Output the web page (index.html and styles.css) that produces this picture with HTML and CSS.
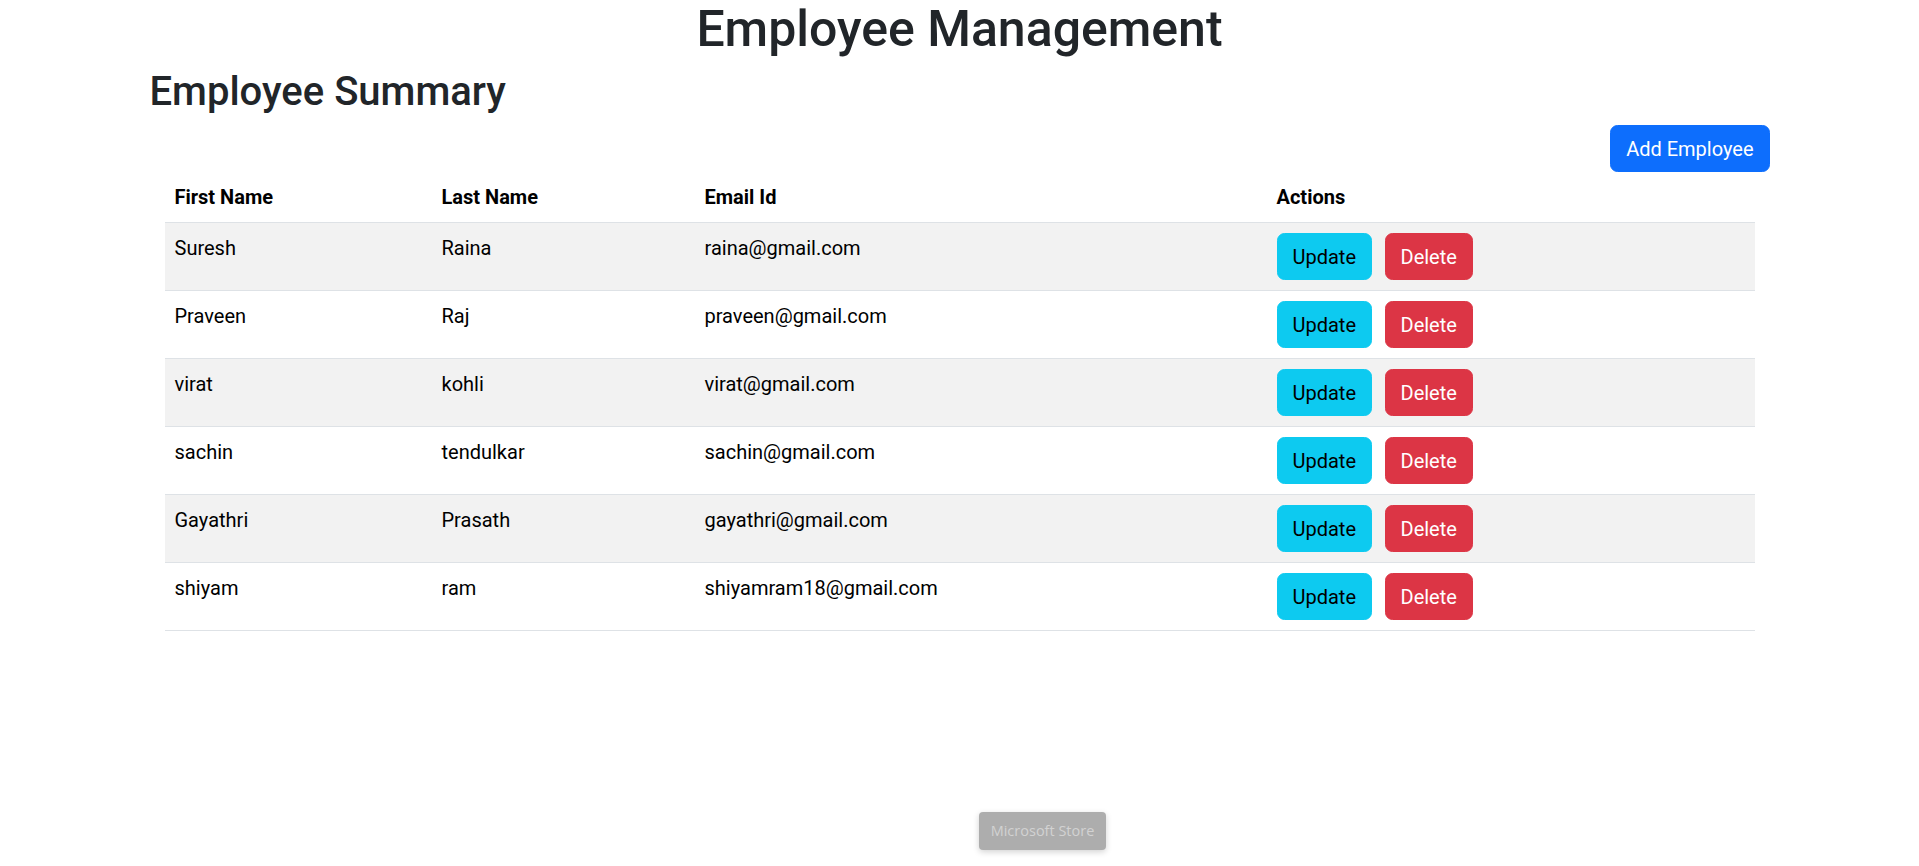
FILE: index.html
```html
<!DOCTYPE html>
<html lang="en">
<head>
<meta charset="utf-8">
<title>Employee Management</title>
<link rel="stylesheet" href="styles.css">
</head>
<body>
<h1 class="page-title">Employee Management</h1>
<div class="container">
  <h2 class="section-title">Employee Summary</h2>
  <div class="toolbar">
    <button class="btn btn-primary">Add Employee</button>
  </div>
  <div class="table-wrap">
    <table class="emp-table">
      <thead>
        <tr>
          <th class="col-first">First Name</th>
          <th class="col-last">Last Name</th>
          <th class="col-email">Email Id</th>
          <th class="col-actions">Actions</th>
        </tr>
      </thead>
      <tbody>
        <tr>
          <td>Suresh</td><td>Raina</td><td>raina@gmail.com</td>
          <td><button class="btn btn-info">Update</button><button class="btn btn-danger">Delete</button></td>
        </tr>
        <tr>
          <td>Praveen</td><td>Raj</td><td>praveen@gmail.com</td>
          <td><button class="btn btn-info">Update</button><button class="btn btn-danger">Delete</button></td>
        </tr>
        <tr>
          <td>virat</td><td>kohli</td><td>virat@gmail.com</td>
          <td><button class="btn btn-info">Update</button><button class="btn btn-danger">Delete</button></td>
        </tr>
        <tr>
          <td>sachin</td><td>tendulkar</td><td>sachin@gmail.com</td>
          <td><button class="btn btn-info">Update</button><button class="btn btn-danger">Delete</button></td>
        </tr>
        <tr>
          <td>Gayathri</td><td>Prasath</td><td>gayathri@gmail.com</td>
          <td><button class="btn btn-info">Update</button><button class="btn btn-danger">Delete</button></td>
        </tr>
        <tr>
          <td>shiyam</td><td>ram</td><td>shiyamram18@gmail.com</td>
          <td><button class="btn btn-info">Update</button><button class="btn btn-danger">Delete</button></td>
        </tr>
      </tbody>
    </table>
  </div>
</div>
<div class="store-toast">Microsoft Store</div>
</body>
</html>
```
FILE: styles.css
```css
* { box-sizing: border-box; }

html, body {
  margin: 0;
  padding: 0;
  background: #fff;
}

body {
  font-family: Roboto, "Liberation Sans", sans-serif;
  font-size: 20px;
  line-height: 30px;
  color: #212529;
}

.page-title {
  margin: -1px 0 9px;
  font-size: 50px;
  line-height: 60px;
  font-weight: 500;
  text-align: center;
  color: #212529;
}

.container {
  width: 1650px;
  margin: 0 auto;
  padding: 0 15px;
}

.section-title {
  margin: 0 0 9px;
  font-size: 40px;
  line-height: 48px;
  font-weight: 500;
  color: #212529;
}

.toolbar {
  display: flex;
  justify-content: flex-end;
}

.btn {
  display: inline-block;
  font-family: inherit;
  font-size: 20px;
  line-height: 30px;
  font-weight: 400;
  padding: 7.5px 15px;
  border: 1px solid transparent;
  border-radius: 7.5px;
  cursor: pointer;
}

.btn-primary {
  background: #0d6efd;
  border-color: #0d6efd;
  color: #fff;
}

.btn-info {
  background: #0dcaf0;
  border-color: #0dcaf0;
  color: #000;
}

.btn-danger {
  background: #dc3545;
  border-color: #dc3545;
  color: #fff;
  margin-left: 12.5px;
}

.table-wrap {
  margin: 0 15px;
}

.emp-table {
  width: 100%;
  border-collapse: collapse;
  table-layout: fixed;
  color: #000;
}

.emp-table th,
.emp-table td {
  text-align: left;
  vertical-align: top;
  padding: 10px;
  border-bottom: 1px solid #dee2e6;
}

.emp-table th {
  font-weight: 700;
}

.emp-table tbody tr:nth-child(odd) td {
  background: #f2f2f2;
}

.col-first { width: 267px; }
.col-last { width: 263px; }
.col-email { width: 572px; }
.col-actions { width: 488px; }

.store-toast {
  position: absolute;
  left: 979px;
  top: 812px;
  width: 127px;
  height: 38px;
  display: flex;
  align-items: center;
  justify-content: center;
  background: #adadad;
  color: #d2d2d2;
  font-family: "Open Sans", "Noto Sans", sans-serif;
  font-size: 14.5px;
  border-radius: 4px;
  box-shadow: 0 2px 6px rgba(0, 0, 0, 0.18);
}
```
